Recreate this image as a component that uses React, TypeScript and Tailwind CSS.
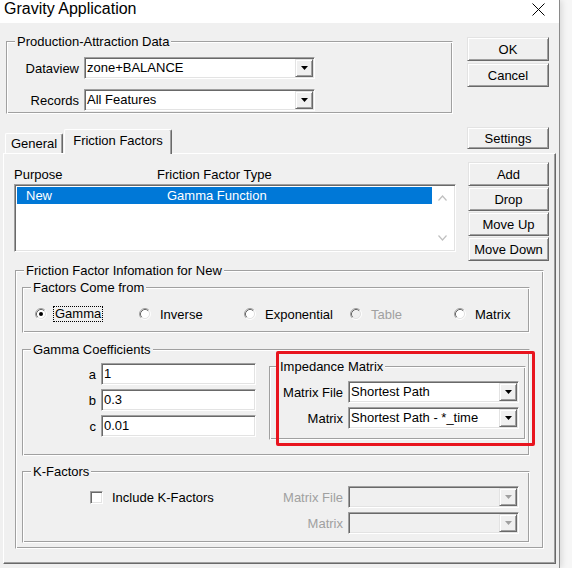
import React from "react";

const raised =
  "bg-[#f0f0f0] border border-t-[#e3e3e3] border-l-[#e3e3e3] border-r-[#696969] border-b-[#696969] shadow-[inset_1px_1px_0_#ffffff,inset_-1px_-1px_0_#a0a0a0]";
const sunken =
  "border border-t-[#a0a0a0] border-l-[#a0a0a0] border-r-white border-b-white shadow-[inset_1px_1px_0_#696969,inset_-1px_-1px_0_#e3e3e3]";
const etched =
  "border border-t-[#a0a0a0] border-l-[#a0a0a0] border-r-white border-b-white shadow-[inset_1px_1px_0_#ffffff,inset_-1px_-1px_0_#a0a0a0]";

function Btn({ label, className = "" }: { label: string; className?: string }) {
  return (
    <div className={`${raised} flex items-center justify-center leading-[15px] ${className}`}>
      {label}
    </div>
  );
}

function Group({
  label,
  className = "",
  children,
}: {
  label: string;
  className?: string;
  children?: React.ReactNode;
}) {
  return (
    <fieldset className={`${etched} ${className}`}>
      <legend className="ml-[8px] px-[2px] h-[15px] leading-[15px] bg-[#f0f0f0]">{label}</legend>
      {children}
    </fieldset>
  );
}

function Combo({
  text = "",
  className = "",
  disabled = false,
}: {
  text?: string;
  className?: string;
  disabled?: boolean;
}) {
  return (
    <div
      className={`${sunken} h-[22px] p-[1px] flex ${disabled ? "bg-[#f0f0f0]" : "bg-white"} ${className}`}
    >
      <div className="flex-1 pl-[1px] leading-[18px] whitespace-nowrap overflow-hidden">{text}</div>
      <div className={`${raised} w-[18px] h-[18px] flex items-center justify-center`}>
        <svg width="7" height="4" viewBox="0 0 7 4">
          <polygon points="0,0 7,0 3.5,4" fill={disabled ? "#a0a0a0" : "#000000"} />
        </svg>
      </div>
    </div>
  );
}

function Field({ text, className = "" }: { text: string; className?: string }) {
  return (
    <div className={`${sunken} h-[22px] p-[1px] bg-white flex items-center ${className}`}>
      <span className="pl-[1px] leading-[18px]">{text}</span>
    </div>
  );
}

function Radio({ checked = false, disabled = false }: { checked?: boolean; disabled?: boolean }) {
  return (
    <svg width="12" height="12" viewBox="0 0 12 12" className="shrink-0">
      <circle cx="6" cy="6" r="4.5" fill={disabled ? "#f0f0f0" : "#ffffff"} />
      <path d="M2.11 9.89 A5.5 5.5 0 0 1 9.89 2.11" fill="none" stroke="#a0a0a0" strokeWidth="1" />
      <path d="M9.89 2.11 A5.5 5.5 0 0 1 2.11 9.89" fill="none" stroke="#ffffff" strokeWidth="1" />
      <path d="M2.82 9.18 A4.5 4.5 0 0 1 9.18 2.82" fill="none" stroke="#696969" strokeWidth="1" />
      <path d="M9.18 2.82 A4.5 4.5 0 0 1 2.82 9.18" fill="none" stroke="#e3e3e3" strokeWidth="1" />
      {checked && <circle cx="6" cy="6" r="2" fill="#000000" />}
    </svg>
  );
}

export default function App() {
  return (
    <div className="w-[572px] h-[568px] bg-[#f6f6f6] overflow-hidden text-[13px] leading-[15px] text-black font-['Liberation_Sans',Arial,sans-serif]">
      <div className="relative w-[559px] h-[568px] bg-[#f0f0f0] flex flex-col shadow-[1px_0_0_#8a8a8a,3px_0_6px_rgba(0,0,0,0.12)]">
        {/* Title bar */}
        <div className="h-[23px] bg-white flex items-start justify-between pl-[4px] pr-[14px]">
          <span className="text-[16px] leading-[18px]">Gravity Application</span>
          <svg width="13" height="13" viewBox="0 0 13 13" className="mt-[3px]">
            <path d="M0.5 0.5 L12.5 12.5 M12.5 0.5 L0.5 12.5" stroke="#000" strokeWidth="1" />
          </svg>
        </div>

        {/* Top row */}
        <div className="mt-[11px] h-[80px] flex items-start">
          <Group label="Production-Attraction Data" className="ml-[6px] w-[447px] pb-[2px]">
            <div className="mt-[8px] flex items-center">
              <span className="w-[72px] text-right">Dataview</span>
              <Combo text="zone+BALANCE" className="ml-[5px] w-[231px]" />
            </div>
            <div className="mt-[10px] flex items-center">
              <span className="w-[72px] text-right">Records</span>
              <Combo text="All Features" className="ml-[5px] w-[231px]" />
            </div>
          </Group>
          <div className="ml-[14px] mt-[3px] flex flex-col gap-[2px]">
            <Btn label="OK" className="w-[82px] h-[24px]" />
            <Btn label="Cancel" className="w-[82px] h-[24px]" />
          </div>
        </div>

        {/* Tabs row */}
        <div className="mt-[13px] h-[26px] flex items-end justify-between pl-[5px] pr-[10px]">
          <div className="flex items-end">
            <div className="w-[58px] h-[20px] flex items-center justify-center border-t border-l border-r border-t-white border-l-white border-r-[#696969] shadow-[inset_-1px_0_0_#a0a0a0] rounded-t-[2px]">
              General
            </div>
            <div className="relative z-10 ml-[1px] -mb-[1px] w-[108px] h-[25px] pb-[4px] bg-[#f0f0f0] flex items-center justify-center border-t border-l border-r border-t-white border-l-white border-r-[#696969] shadow-[inset_-1px_0_0_#a0a0a0] rounded-t-[2px]">
              Friction Factors
            </div>
          </div>
          <Btn label="Settings" className="self-start w-[82px] h-[22px]" />
        </div>

        {/* Tab panel */}
        <div className="ml-[3px] w-[553px] h-[411px] border border-t-white border-l-white border-r-[#696969] border-b-[#696969] shadow-[inset_-1px_-1px_0_#a0a0a0]">
          <div className="flex items-start">
            <div className="pl-[10px] pt-[13px]">
              <div className="flex h-[15px]">
                <span className="w-[143px]">Purpose</span>
                <span>Friction Factor Type</span>
              </div>
              <div className={`${sunken} mt-[2px] w-[442px] h-[68px] p-[2px] bg-white flex`}>
                <div className="w-[415px]">
                  <div className="h-[17px] bg-[#0078d7] text-white flex items-center">
                    <span className="w-[150px] pl-[9px]">New</span>
                    <span>Gamma Function</span>
                  </div>
                </div>
                <div className="flex-1 flex flex-col items-center justify-between py-[8px]">
                  <svg width="9" height="6" viewBox="0 0 9 6">
                    <path d="M0.5 5.5 L4.5 1 L8.5 5.5" fill="none" stroke="#c0c0c0" strokeWidth="1.2" />
                  </svg>
                  <svg width="9" height="6" viewBox="0 0 9 6">
                    <path d="M0.5 0.5 L4.5 5 L8.5 0.5" fill="none" stroke="#c0c0c0" strokeWidth="1.2" />
                  </svg>
                </div>
              </div>
            </div>
            <div className="ml-[12px] pt-[8px] flex flex-col gap-[1px]">
              <Btn label="Add" className="w-[81px] h-[24px]" />
              <Btn label="Drop" className="w-[81px] h-[24px]" />
              <Btn label="Move Up" className="w-[81px] h-[24px]" />
              <Btn label="Move Down" className="w-[81px] h-[24px]" />
            </div>
          </div>

          <Group label="Friction Factor Infomation for New" className="mt-[2px] ml-[11px] w-[529px] pb-[5px]">
            <Group label="Factors Come from" className="mt-[2px] ml-[6px] w-[508px] pb-[10px]">
              <div className="mt-[11px] h-[16px] pl-[12px] flex items-center">
                <div className="w-[104px] flex items-center">
                  <Radio checked />
                  <span className="ml-[6px] px-[1px] border border-dotted border-black leading-[14px]">Gamma</span>
                </div>
                <div className="w-[105px] flex items-center">
                  <Radio />
                  <span className="ml-[9px]">Inverse</span>
                </div>
                <div className="w-[106px] flex items-center">
                  <Radio />
                  <span className="ml-[9px]">Exponential</span>
                </div>
                <div className="w-[104px] flex items-center">
                  <Radio disabled />
                  <span className="ml-[9px] text-[#a0a0a0]">Table</span>
                </div>
                <div className="flex items-center">
                  <Radio />
                  <span className="ml-[9px]">Matrix</span>
                </div>
              </div>
            </Group>

            <Group label="Gamma Coefficients" className="mt-[9px] ml-[6px] w-[508px] pb-[15px]">
              <div className="flex items-start">
                <div className="mt-[6px] flex flex-col gap-[4px]">
                  <div className="flex items-center">
                    <span className="w-[73px] text-right">a</span>
                    <Field text="1" className="ml-[5px] w-[155px]" />
                  </div>
                  <div className="flex items-center">
                    <span className="w-[73px] text-right">b</span>
                    <Field text="0.3" className="ml-[5px] w-[155px]" />
                  </div>
                  <div className="flex items-center">
                    <span className="w-[73px] text-right">c</span>
                    <Field text="0.01" className="ml-[5px] w-[155px]" />
                  </div>
                </div>
                <Group label="Impedance Matrix" className="mt-[2px] ml-[13px] w-[257px] pb-[10px]">
                  <div className="mt-[7px] flex items-center">
                    <span className="w-[73px] text-right">Matrix File</span>
                    <Combo text="Shortest Path" className="ml-[5px] w-[171px]" />
                  </div>
                  <div className="mt-[4px] flex items-center">
                    <span className="w-[73px] text-right">Matrix</span>
                    <Combo text="Shortest Path - *_time" className="ml-[5px] w-[171px]" />
                  </div>
                </Group>
              </div>
            </Group>

            <Group label="K-Factors" className="mt-[8px] ml-[6px] w-[508px] pb-[8px]">
              <div className="mt-[7px] flex items-center">
                <div className="w-[247px] pl-[67px] flex items-center">
                  <div className={`${sunken} w-[13px] h-[13px] bg-white`} />
                  <span className="ml-[9px]">Include K-Factors</span>
                </div>
                <span className="w-[73px] text-right text-[#a0a0a0]">Matrix File</span>
                <Combo disabled className="ml-[5px] w-[171px]" />
              </div>
              <div className="mt-[4px] flex items-center">
                <div className="w-[247px]" />
                <span className="w-[73px] text-right text-[#a0a0a0]">Matrix</span>
                <Combo disabled className="ml-[5px] w-[171px]" />
              </div>
            </Group>
          </Group>
        </div>

        {/* Red highlight annotation */}
        <div className="absolute left-[276px] top-[351px] w-[259px] h-[95px] border-[3px] border-[#e8141e] rounded-[2px] pointer-events-none" />
      </div>
    </div>
  );
}
